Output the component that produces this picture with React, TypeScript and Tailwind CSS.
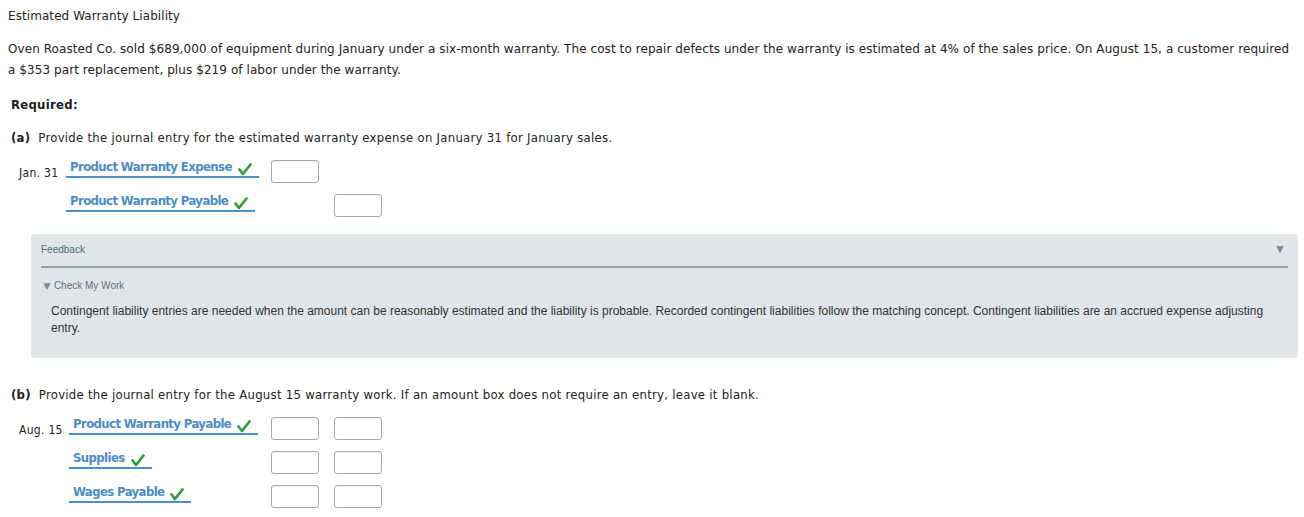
import React from "react";

const cond = "font-['DejaVu_Sans_Condensed','DejaVu_Sans',sans-serif]";

const Check = () => (
  <svg width="14" height="13" viewBox="0 0 14 13" className="ml-[6px] mt-[3px] shrink-0">
    <path d="M1.5 6.5 L5 11 L12.5 1.5" fill="none" stroke="#2f9a35" strokeWidth="2.6" strokeLinecap="round" strokeLinejoin="round" />
  </svg>
);

const Account = ({ name }: { name: string }) => (
  <div className="inline-flex items-start h-[18px] border-b-2 border-[#4a90c9] pl-[4px] pr-[7px] whitespace-nowrap">
    <span className={`${cond} font-bold text-[13px] leading-[14px] text-[#4a8cc4] tracking-[-0.6px]`}>{name}</span>
    <Check />
  </div>
);

const Box = () => (
  <div className="mt-[6px] w-[48px] h-[23px] rounded-[3px] border border-[#a9a9a9] bg-white shadow-[inset_0_1px_1px_rgba(0,0,0,0.06)]" />
);

export default function App() {
  return (
    <div className="w-[1304px] h-[517px] bg-white text-[#222] overflow-hidden font-['DejaVu_Sans',sans-serif]">
      <div className="pl-[8px] pt-[8px] text-[12px] leading-[16px] tracking-[0.075px]">Estimated Warranty Liability</div>
      <div className="pl-[8px] pt-[15px] pr-[8px] text-[12px] leading-[21px] tracking-[0.075px]">
        Oven Roasted Co. sold $689,000 of equipment during January under a six-month warranty. The cost to repair defects under the warranty is estimated at 4% of the sales price. On August 15, a customer required a $353 part replacement, plus $219 of labor under the warranty.
      </div>
      <div className={`pl-[11px] pt-[16px] text-[13px] leading-[16px] font-bold ${cond} tracking-[0.27px]`}>Required:</div>
      <div className={`pl-[11px] pt-[17px] text-[13px] leading-[16px] ${cond} tracking-[0.27px]`}>
        <span className="font-bold">(a)</span>&nbsp; Provide the journal entry for the estimated warranty expense on January 31 for January sales.
      </div>

      <div className={`pl-[19px] pt-[8px] ${cond}`}>
        <div className="flex items-start h-[34px]">
          <div className="w-[47px] pt-[12px] text-[12px] leading-[14px] tracking-[0.3px]">Jan. 31</div>
          <div className="w-[205px]">
            <Account name="Product Warranty Expense" />
          </div>
          <Box />
        </div>
        <div className="flex items-start h-[34px]">
          <div className="w-[47px]" />
          <div className="w-[268px]">
            <Account name="Product Warranty Payable" />
          </div>
          <Box />
        </div>
      </div>

      <div className="mt-[12px] ml-[31px] w-[1267px] h-[124px] rounded-[4px] bg-[#dfe5e8] px-[10px] pt-[7px] font-['Liberation_Sans',Arial,sans-serif]">
        <div className="flex justify-between items-center h-[16px]">
          <span className="text-[10px] text-[#4f6f73]">Feedback</span>
          <span className="text-[12px] text-[#7f898c] mr-[2px]">▼</span>
        </div>
        <div className="mt-[9px] border-t-2 border-[#949fa3] h-0" />
        <div className="mt-[12px] flex items-center text-[10px] text-[#5d7477] leading-[12px]">
          <span className="text-[12px] text-[#7f898c] mr-[1px]">▼</span>Check My Work
        </div>
        <div className="mt-[11px] pl-[10px] pr-[20px] text-[12px] leading-[17px] text-[#333]">
          Contingent liability entries are needed when the amount can be reasonably estimated and the liability is probable. Recorded contingent liabilities follow the matching concept. Contingent liabilities are an accrued expense adjusting entry.
        </div>
      </div>

      <div className={`pl-[11px] pt-[29px] text-[13px] leading-[16px] ${cond} tracking-[0.27px]`}>
        <span className="font-bold">(b)</span>&nbsp; Provide the journal entry for the August 15 warranty work. If an amount box does not require an entry, leave it blank.
      </div>

      <div className={`pl-[19px] pt-[8px] ${cond}`}>
        {["Product Warranty Payable", "Supplies", "Wages Payable"].map((name, i) => (
          <div key={name} className="flex items-start h-[34px]">
            <div className="w-[50px] pt-[12px] text-[12px] leading-[14px] tracking-[0.3px]">{i === 0 ? "Aug. 15" : ""}</div>
            <div className="w-[202px]">
              <Account name={name} />
            </div>
            <div className="flex gap-[15px]">
              <Box />
              <Box />
            </div>
          </div>
        ))}
      </div>
    </div>
  );
}
